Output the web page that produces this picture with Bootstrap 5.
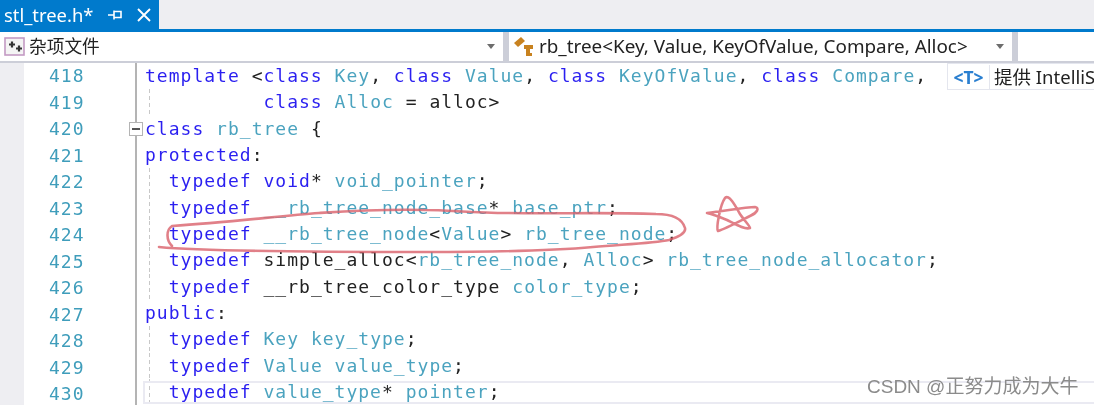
<!doctype html>
<html lang="zh"><head><meta charset="utf-8">
<link href="https://cdn.jsdelivr.net/npm/bootstrap@5.3.0/dist/css/bootstrap.min.css" rel="stylesheet">
<script src="https://cdn.jsdelivr.net/npm/bootstrap@5.3.0/dist/js/bootstrap.bundle.min.js"></script>
<style>
html,body{height:405px;overflow:hidden;background:#fff}
.vs-page{position:relative;width:1094px;height:405px;overflow:hidden;font-family:"Noto Sans","Noto Sans CJK SC",sans-serif;color:#222;filter:blur(.35px)}
.tab-strip{height:29px;background:#eeeef2}
.file-tab{width:159px;background:#007acc;color:#fff;font-size:18.4px;padding-left:4px}
.tab-name{width:104px;line-height:29px}
.pin-gap{margin-left:15px}
.blue-rule{height:3px;background:#007acc}
.nav-strip{height:31px;background:#fff;border-bottom:2px solid #ccced8;font-size:18.85px}
.combo-left{width:503px}
.combo-right{width:503px}
.combo-gap{width:6px;background:#ccced8}
.combo-arrow{width:0;height:0;border:4px solid transparent;border-top:5px solid #6d6d6d;border-bottom:0}
.combo-icon{margin:0 4px 0 4px;flex:none}
.cjk-label{font-size:17.7px}
.editor{height:342px;background:#fff}
.side-margin{width:24px;background:#eeeef2}
.num-col{width:113px;border-right:2px solid #b4b4b4;font-family:"DejaVu Sans Mono",monospace;font-size:18px;letter-spacing:1px;color:#3f9dbb}
.num-col div{height:26.5px;line-height:26.5px;padding-left:25px}
.code-col{font-family:"DejaVu Sans Mono",monospace;font-size:18px;letter-spacing:1.01px;color:#222;padding-left:8px}
.code-ln{height:26.35px;line-height:26.35px;white-space:pre}
.guide{background:repeating-linear-gradient(#c8c8c8 0 4px,transparent 4px 7px) 4px 0/1px 100% no-repeat}
.kw{color:#2a1ff0}
.ty{color:#4ba3bf}
.tip{position:absolute;left:947px;top:63px;width:147px;height:27px;background:#fff;border:1px solid #e4e6ee;border-right:0;font-size:18.5px;line-height:25px;color:#222;white-space:nowrap;overflow:hidden}
.tip b{display:inline-block;width:42px;text-align:center;color:#2a7fd0;border-right:1px solid #e4e6ee;margin-right:4px;font-weight:700;font-size:17.5px}
.cur-line{position:absolute;left:143px;top:381px;width:951px;height:23px;border:2px solid #eaeaf2;border-right:0}
.fold-box{position:absolute;left:129px;top:122px;width:14px;height:14px;background:#fff;border:1px solid #b4b4b4}
.fold-box::after{content:"";position:absolute;left:2px;right:2px;top:5px;height:2px;background:#555}
.ink{position:absolute;left:0;top:0;pointer-events:none}
.mark-csdn{position:absolute;left:867px;top:375px;font-size:19px;line-height:24px;color:#8b8b8b;font-family:"Liberation Sans","Noto Sans CJK SC",sans-serif;white-space:nowrap}
</style></head><body>
<div class="vs-page">
 <div class="tab-strip d-flex">
  <div class="file-tab d-flex align-items-center">
   <span class="tab-name">stl_tree.h*</span>
   <svg width="14" height="10" viewBox="0 0 14 10"><path d="M0 5h6M6 .5v9M6 1.5h7v6H6" fill="none" stroke="#fff" stroke-width="1.6"/></svg>
   <svg class="pin-gap" width="14" height="14" viewBox="0 0 14 14"><path d="M1 1l12 12M13 1L1 13" stroke="#fff" stroke-width="1.9"/></svg>
  </div>
 </div>
 <div class="blue-rule"></div>
 <div class="nav-strip d-flex">
  <div class="combo-left d-flex align-items-center">
   <svg class="combo-icon" width="21" height="19" viewBox="0 0 21 19"><rect x="1" y="1" width="19" height="17" fill="#f4f4f4" stroke="#c39ac4" stroke-width="1.6"/><path d="M8 4.5v6M5 7.5h6M15 8.5v6M12 11.5h6" stroke="#333" stroke-width="2.2"/></svg>
   <span class="flex-grow-1 cjk-label">杂项文件</span><span class="combo-arrow me-2"></span>
  </div>
  <div class="combo-gap"></div>
  <div class="combo-right d-flex align-items-center">
   <svg class="combo-icon ms-1" width="22" height="22" viewBox="0 0 22 22"><path d="M1 7L8 1l4 4-7 6z" fill="#c8821f"/><path d="M11 9h9v4h-3v4h2v3h-6v-7h-2z" fill="#c8821f"/></svg>
   <span class="flex-grow-1">rb_tree&lt;Key, Value, KeyOfValue, Compare, Alloc&gt;</span><span class="combo-arrow me-2"></span>
  </div>
  <div class="combo-gap"></div>
 </div>
 <div class="editor d-flex">
  <div class="side-margin"></div>
  <div class="num-col"><div>418</div><div>419</div><div>420</div><div>421</div><div>422</div><div>423</div><div>424</div><div>425</div><div>426</div><div>427</div><div>428</div><div>429</div><div>430</div></div>
  <div class="code-col">
<div class="code-ln"><span class="kw">template</span> &lt;<span class="kw">class</span> <span class="ty">Key</span>, <span class="kw">class</span> <span class="ty">Value</span>, <span class="kw">class</span> <span class="ty">KeyOfValue</span>, <span class="kw">class</span> <span class="ty">Compare</span>,</div>
<div class="code-ln guide">          <span class="kw">class</span> <span class="ty">Alloc</span> = alloc&gt;</div>
<div class="code-ln"><span class="kw">class</span> <span class="ty">rb_tree</span> {</div>
<div class="code-ln"><span class="kw">protected</span>:</div>
<div class="code-ln guide">  <span class="kw">typedef</span> <span class="kw">void</span>* <span class="ty">void_pointer</span>;</div>
<div class="code-ln guide">  <span class="kw">typedef</span> <span class="ty">__rb_tree_node_base</span>* <span class="ty">base_ptr</span>;</div>
<div class="code-ln guide">  <span class="kw">typedef</span> <span class="ty">__rb_tree_node</span>&lt;<span class="ty">Value</span>&gt; <span class="ty">rb_tree_node</span>;</div>
<div class="code-ln guide">  <span class="kw">typedef</span> simple_alloc&lt;<span class="ty">rb_tree_node</span>, <span class="ty">Alloc</span>&gt; <span class="ty">rb_tree_node_allocator</span>;</div>
<div class="code-ln guide">  <span class="kw">typedef</span> __rb_tree_color_type <span class="ty">color_type</span>;</div>
<div class="code-ln"><span class="kw">public</span>:</div>
<div class="code-ln guide">  <span class="kw">typedef</span> <span class="ty">Key</span> <span class="ty">key_type</span>;</div>
<div class="code-ln guide">  <span class="kw">typedef</span> <span class="ty">Value</span> <span class="ty">value_type</span>;</div>
<div class="code-ln guide">  <span class="kw">typedef</span> <span class="ty">value_type</span>* <span class="ty">pointer</span>;</div>
  </div>
 </div>
 <div class="fold-box"></div>
 <div class="tip"><b>&lt;T&gt;</b>提供 IntelliS</div>
 <div class="cur-line"></div>
 <svg class="ink" width="1094" height="405" viewBox="0 0 1094 405" fill="none" stroke="#d9606a" stroke-opacity=".8" stroke-width="2.6" stroke-linecap="round" stroke-linejoin="round">
  <path d="M159 247C200 251 300 252 425 252C500 252 560 250 593 247C630 244 655 243 669 240C682 236 686 232 685 228C682 218 670 214 656 214C600 212 560 214 509 213C470 213 450 210 425 210C380 209 350 211 319 213C280 216 230 222 172 226C166 230 166 240 172 246"/>
  <path d="M707 213C725 211 745 207 755 207C760 208 757 213 750 216C740 221 725 229 718 231C716 228 720 205 725 198C729 194 735 205 740 214C743 219 750 226 750 228C745 230 735 224 727 220C720 217 712 214 707 213Z"/>
 </svg>
 <div class="mark-csdn">CSDN @正努力成为大牛</div>
</div>
</body></html>
